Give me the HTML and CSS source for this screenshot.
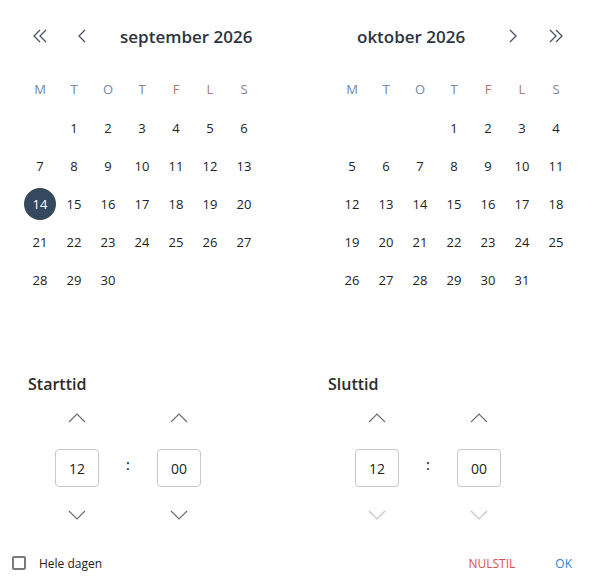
FILE: index.html
```html
<!DOCTYPE html>
<html>
<head>
    <title>Periode</title>
    <link rel="stylesheet" href="styles.css">
</head>
<body>
    <div class="picker">
        <div class="months">
            <div class="month">
                <div class="month-head">
                    <button class="nav" type="button">
                        <svg width="16" height="16" viewBox="0 0 16 16"><path d="M8 2 L2 8 L8 14 M14 2 L8 8 L14 14" /></svg>
                    </button>
                    <button class="nav nav-single" type="button">
                        <svg width="16" height="16" viewBox="0 0 16 16"><path d="M11 2 L5 8 L11 14" /></svg>
                    </button>
                    <span class="title">september 2026</span>
                </div>
                <div class="grid">
                    <span class="wd">M</span><span class="wd">T</span><span class="wd">O</span><span class="wd">T</span><span class="wd weekend">F</span><span class="wd weekend">L</span><span class="wd">S</span>
                    <span></span><span class="day">1</span><span class="day">2</span><span class="day">3</span><span class="day">4</span><span class="day">5</span><span class="day">6</span>
                    <span class="day">7</span><span class="day">8</span><span class="day">9</span><span class="day">10</span><span class="day">11</span><span class="day">12</span><span class="day">13</span>
                    <span class="day"><b class="selected">14</b></span><span class="day">15</span><span class="day">16</span><span class="day">17</span><span class="day">18</span><span class="day">19</span><span class="day">20</span>
                    <span class="day">21</span><span class="day">22</span><span class="day">23</span><span class="day">24</span><span class="day">25</span><span class="day">26</span><span class="day">27</span>
                    <span class="day">28</span><span class="day">29</span><span class="day">30</span>
                </div>
            </div>
            <div class="month">
                <div class="month-head">
                    <span class="title">oktober 2026</span>
                    <button class="nav nav-single" type="button">
                        <svg width="16" height="16" viewBox="0 0 16 16"><path d="M5 2 L11 8 L5 14" /></svg>
                    </button>
                    <button class="nav" type="button">
                        <svg width="16" height="16" viewBox="0 0 16 16"><path d="M2 2 L8 8 L2 14 M8 2 L14 8 L8 14" /></svg>
                    </button>
                </div>
                <div class="grid">
                    <span class="wd">M</span><span class="wd">T</span><span class="wd">O</span><span class="wd">T</span><span class="wd weekend">F</span><span class="wd weekend">L</span><span class="wd">S</span>
                    <span></span><span></span><span></span><span class="day">1</span><span class="day">2</span><span class="day">3</span><span class="day">4</span>
                    <span class="day">5</span><span class="day">6</span><span class="day">7</span><span class="day">8</span><span class="day">9</span><span class="day">10</span><span class="day">11</span>
                    <span class="day">12</span><span class="day">13</span><span class="day">14</span><span class="day">15</span><span class="day">16</span><span class="day">17</span><span class="day">18</span>
                    <span class="day">19</span><span class="day">20</span><span class="day">21</span><span class="day">22</span><span class="day">23</span><span class="day">24</span><span class="day">25</span>
                    <span class="day">26</span><span class="day">27</span><span class="day">28</span><span class="day">29</span><span class="day">30</span><span class="day">31</span>
                </div>
            </div>
        </div>

        <div class="times">
            <div class="time">
                <h2>Starttid</h2>
                <div class="spinners">
                    <div class="spin">
                        <button class="arrow" type="button"><svg width="18" height="10" viewBox="0 0 18 10"><path d="M1 9 L9 1 L17 9" /></svg></button>
                        <div class="box">12</div>
                        <button class="arrow" type="button"><svg width="18" height="10" viewBox="0 0 18 10"><path d="M1 1 L9 9 L17 1" /></svg></button>
                    </div>
                    <span class="colon">:</span>
                    <div class="spin">
                        <button class="arrow" type="button"><svg width="18" height="10" viewBox="0 0 18 10"><path d="M1 9 L9 1 L17 9" /></svg></button>
                        <div class="box">00</div>
                        <button class="arrow" type="button"><svg width="18" height="10" viewBox="0 0 18 10"><path d="M1 1 L9 9 L17 1" /></svg></button>
                    </div>
                </div>
            </div>
            <div class="time">
                <h2>Sluttid</h2>
                <div class="spinners">
                    <div class="spin">
                        <button class="arrow" type="button"><svg width="18" height="10" viewBox="0 0 18 10"><path d="M1 9 L9 1 L17 9" /></svg></button>
                        <div class="box">12</div>
                        <button class="arrow disabled" type="button"><svg width="18" height="10" viewBox="0 0 18 10"><path d="M1 1 L9 9 L17 1" /></svg></button>
                    </div>
                    <span class="colon">:</span>
                    <div class="spin">
                        <button class="arrow" type="button"><svg width="18" height="10" viewBox="0 0 18 10"><path d="M1 9 L9 1 L17 9" /></svg></button>
                        <div class="box">00</div>
                        <button class="arrow disabled" type="button"><svg width="18" height="10" viewBox="0 0 18 10"><path d="M1 1 L9 9 L17 1" /></svg></button>
                    </div>
                </div>
            </div>
        </div>

        <div class="footer">
            <label class="allday">
                <span class="check"></span>
                Hele dagen
            </label>
            <div class="actions">
                <button class="reset" type="button">NULSTIL</button>
                <button class="ok" type="button">OK</button>
            </div>
        </div>
    </div>
</body>
</html>
```

FILE: styles.css
```css
body {
    margin: 0;
    background-color: white;
    font-family: "Open Sans", "Noto Sans", sans-serif;
    color: #2b2b2b;
}
button {
    border: none;
    background: none;
    padding: 0;
    font-family: inherit;
    cursor: pointer;
}
.picker {
    width: 595px;
    height: 578px;
    display: flex;
    flex-direction: column;
}
.months {
    display: flex;
    gap: 74px;
    padding: 24px 0 0 23px;
}
.month {
    width: 238px;
    flex: none;
}
.month-head {
    display: flex;
    align-items: center;
    height: 24px;
}
.month-head .nav {
    width: 34px;
    height: 24px;
    display: flex;
    align-items: center;
    justify-content: center;
}
.month-head .nav svg path {
    fill: none;
    stroke: #4a5462;
    stroke-width: 1.3;
}
.month-head .nav-single {
    margin-left: 8px;
}
.month-head .title {
    font-size: 17px;
    font-weight: 600;
    color: #2c3440;
    margin-left: 21px;
    margin-right: auto;
}
.month:last-child .month-head .title {
    margin-left: 22px;
}
.month:last-child .month-head .nav-single {
    margin-left: 0;
    margin-right: 9px;
}
.grid {
    display: grid;
    grid-template-columns: repeat(7, 34px);
    grid-template-rows: 41px;
    grid-auto-rows: 38px;
    margin-top: 20px;
}
.grid span {
    display: flex;
    align-items: center;
    justify-content: center;
    font-size: 13px;
}
.grid .wd {
    color: #7487a5;
    font-size: 13px;
}
.grid .wd.weekend {
    color: #b27272;
}
.grid .day {
    color: #222;
}
.grid .selected {
    display: flex;
    align-items: center;
    justify-content: center;
    width: 32px;
    height: 32px;
    border-radius: 50%;
    background-color: #34495e;
    color: white;
    font-weight: 400;
}
.times {
    display: flex;
    margin-top: 74px;
}
.time {
    width: 300px;
    flex: none;
    padding-left: 28px;
    box-sizing: border-box;
}
.time h2 {
    margin: 0;
    font-size: 16px;
    font-weight: 600;
    color: #2b2b2b;
    line-height: 22px;
}
.spinners {
    display: flex;
    align-items: center;
    margin-left: 27px;
    margin-top: 15px;
}
.spin {
    display: flex;
    flex-direction: column;
    align-items: center;
    width: 44px;
}
.spin .arrow {
    height: 16px;
    width: 44px;
    display: flex;
    align-items: center;
    justify-content: center;
}
.spin .arrow svg path {
    fill: none;
    stroke: #6e6e6e;
    stroke-width: 1.2;
}
.spin .arrow.disabled svg path {
    stroke: #c6c6c6;
}
.spin .box {
    box-sizing: border-box;
    width: 44px;
    height: 38px;
    margin: 23px 0 20px;
    border: 1px solid #c8c8c8;
    border-radius: 4px;
    display: flex;
    align-items: center;
    justify-content: center;
    font-size: 14px;
    color: #222;
}
.colon {
    width: 58px;
    text-align: center;
    font-size: 14px;
    font-weight: 600;
    color: #333;
    margin-top: -4px;
}
.footer {
    margin-top: auto;
    height: 30px;
    padding: 0 23px 0 12px;
    display: flex;
    align-items: center;
    justify-content: space-between;
}
.allday {
    display: flex;
    align-items: center;
    gap: 13px;
    font-size: 12px;
    color: #222;
}
.check {
    width: 14px;
    height: 14px;
    box-sizing: border-box;
    border: 2px solid #7a7a7a;
    border-radius: 2px;
}
.actions {
    display: flex;
    gap: 40px;
}
.actions button {
    font-size: 12px;
}
.reset {
    color: #dc5046;
}
.ok {
    color: #2b86cf;
}
```
